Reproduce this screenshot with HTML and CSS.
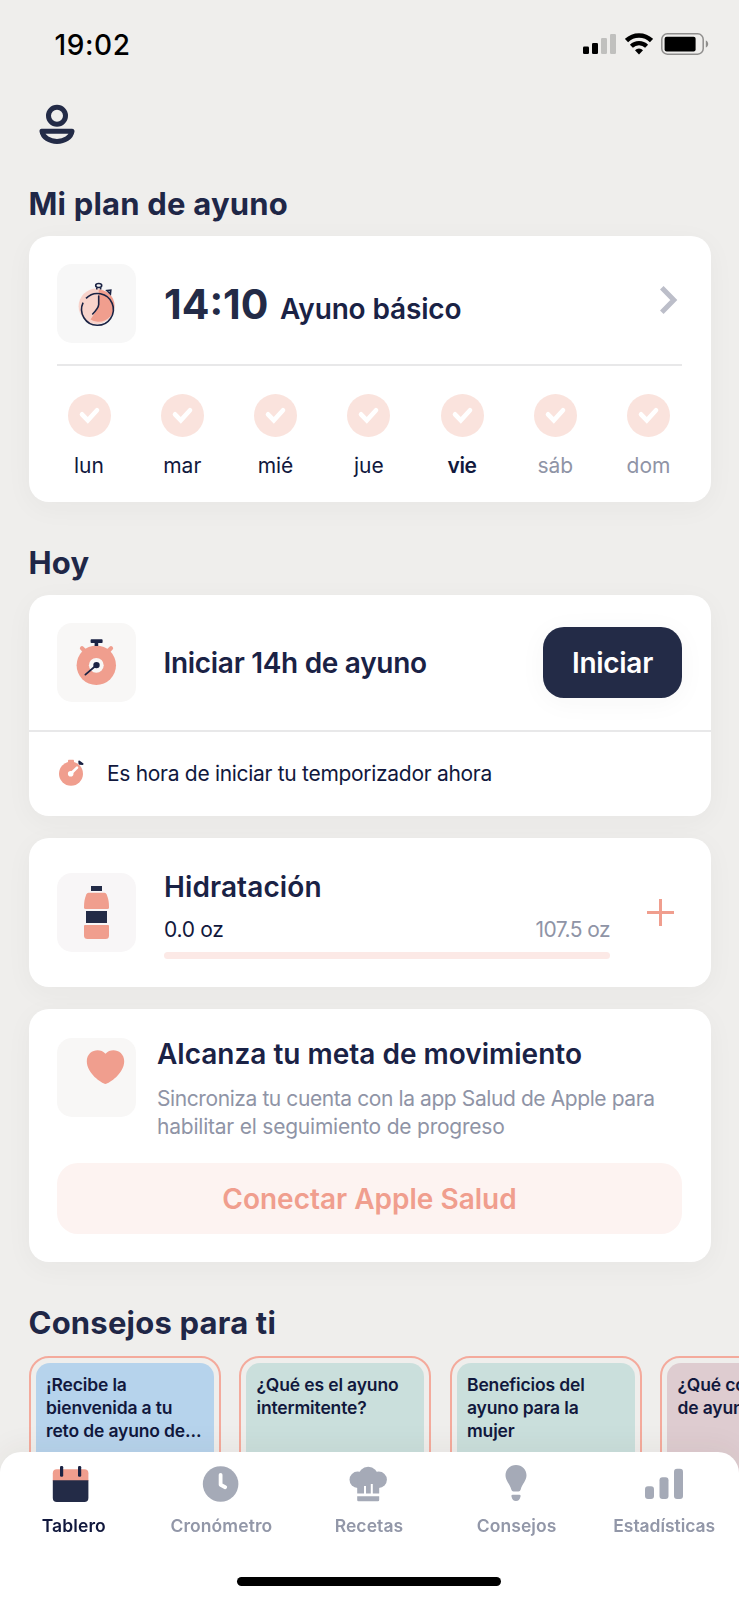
FILE: index.html
```
<!DOCTYPE html>
<html lang="es">
<head>
    <meta charset="UTF-8">
    <meta name="viewport" content="width=device-width, initial-scale=1">
    <title>Tablero</title>
    <link rel="stylesheet" href="styles.css">
</head>
<body>
    <div class="app">
        <div class="status-bar">
            <div class="clock">19:02</div>
            <div class="status-icons">
                <svg width="33" height="20" viewBox="0 0 33 20">
                    <rect x="0" y="12.5" width="6" height="7.5" rx="1.3"/>
                    <rect x="9" y="9" width="6" height="11" rx="1.3"/>
                    <rect x="18" y="4" width="6" height="16" rx="1.3" fill="#c0c0be"/>
                    <rect x="27" y="0" width="6" height="20" rx="1.3" fill="#c0c0be"/>
                </svg>
                <svg class="wifi" width="28" height="22" viewBox="0 0 28 22" fill="none" stroke="#000">
                    <path d="M1.5 7.6A18 18 0 0 1 26.5 7.6" stroke-width="4.6"/>
                    <path d="M6.4 13.3A10.8 10.8 0 0 1 21.6 13.3" stroke-width="4.2"/>
                    <path d="M10 17.3A5.5 5.5 0 0 1 18 17.3L14 21.4Z" fill="#000" stroke="none"/>
                </svg>
                <svg class="battery" width="48" height="22" viewBox="0 0 48 22">
                    <rect x=".8" y=".8" width="41.4" height="20.4" rx="5.5" fill="none" stroke="#8f8e8d" stroke-width="1.5"/>
                    <rect x="3.6" y="3.8" width="31" height="14.6" rx="2"/>
                    <path d="M44.8 7.5C48 8.6 48 13.4 44.8 14.5Z" fill="#8f8e8d"/>
                </svg>
            </div>
        </div>

        <div class="header">
            <svg width="36" height="41" viewBox="0 0 36 41" fill="none" stroke="#232b47" stroke-width="5">
                <circle cx="18" cy="11.7" r="8.5"/>
                <path d="M3 27.3H33C32 33.5 25.5 37.4 18 37.4S4 33.5 3 27.3Z" stroke-linejoin="round"/>
            </svg>
        </div>

        <h2 class="title">Mi plan de ayuno</h2>
        <div class="card plan">
            <div class="plan-head">
                <div class="icon-box">
                    <svg width="79" height="79" viewBox="0 0 79 79" fill="none" stroke="#1b2344" stroke-width="1.6">
                        <circle cx="39.3" cy="42.3" r="17.7" fill="#f8d3cb" stroke="none"/>
                        <path d="M41.7 25.7A16 16 0 1 1 33.5 55.5L38.5 48Q41.7 44 41.7 40Z" fill="#f09e8e" stroke="none"/>
                        <path d="M29 34.4A15.9 15.9 0 1 1 26.1 38.6"/>
                        <path d="M41.7 32V40.5Q41.5 44 35.7 50" stroke-linecap="round"/>
                        <ellipse cx="41.7" cy="21.5" rx="3" ry="2"/>
                        <path d="M39.8 23.5V25.5M43.6 23.5V25.5"/>
                        <path d="M50 26.6L53.8 26.2L53.4 30Z"/>
                    </svg>
                </div>
                <div class="plan-name"><span class="ratio">14:10</span><span class="subtitle">Ayuno básico</span></div>
                <svg class="chevron" width="18" height="28" viewBox="0 0 18 28" fill="none" stroke="#bcbec9" stroke-width="5">
                    <path d="M1.8 1.8L13.8 14L1.8 26.2"/>
                </svg>
            </div>
            <div class="days" id="days"></div>
        </div>

        <h2 class="title">Hoy</h2>
        <div class="card">
            <div class="fast">
                <div class="icon-box warm">
                    <svg width="79" height="79" viewBox="0 0 79 79">
                        <path d="M25 25.3L29 29.3M54 25.3L50 29.3" stroke="#f09e8e" stroke-width="4.2" stroke-linecap="round"/>
                        <circle cx="39.3" cy="42.3" r="19.7" fill="#f09e8e"/>
                        <circle cx="39.3" cy="42.3" r="7.4" fill="#f8f7f6"/>
                        <rect x="33.6" y="16.3" width="12" height="3.8" rx=".8" fill="#1b2344"/>
                        <rect x="37.6" y="19" width="3.6" height="4" fill="#1b2344"/>
                        <circle cx="39.5" cy="42.1" r="3.2" fill="#1b2344"/>
                        <path d="M39.3 42.3L28.4 51.6" stroke="#1b2344" stroke-width="1.8" stroke-linecap="round"/>
                    </svg>
                </div>
                <div class="subtitle start">Iniciar 14h de ayuno</div>
                <button class="btn">Iniciar</button>
            </div>
            <div class="hint">
                <svg width="28" height="28" viewBox="0 0 28 28">
                    <rect x="11" y=".8" width="6" height="4" rx=".8" fill="#f09e8e"/>
                    <circle cx="14" cy="14.7" r="12" fill="#f09e8e"/>
                    <path d="M22.2 2.4L25.6 5L22.4 4.8Z" fill="#1b2344" stroke="#1b2344" stroke-width="1.8" stroke-linejoin="round"/>
                    <circle cx="13.7" cy="14.8" r="2.8" fill="#fff"/>
                    <path d="M14 14.5L20 8.6" stroke="#fff" stroke-width="2.6" stroke-linecap="round"/>
                </svg>
                <span>Es hora de iniciar tu temporizador ahora</span>
            </div>
        </div>

        <div class="card water">
            <div class="icon-box cool">
                <svg width="79" height="79" viewBox="0 0 79 79">
                    <rect x="34" y="13" width="11" height="5" fill="#232b47"/>
                    <path d="M31.5 19.8H47.5Q49 19.8 49.7 21.5C51.5 26 52 29 52 34.5Q52 36 50.5 36H28.5Q27 36 27 34.5C27 29 27.5 26 29.3 21.5Q30 19.8 31.5 19.8Z" fill="#f09e8e"/>
                    <rect x="29" y="38" width="21" height="12" fill="#232b47"/>
                    <path d="M28 52H51Q52 52 52 53V62.5Q52 66 48.5 66H30.5Q27 66 27 62.5V53Q27 52 28 52Z" fill="#f09e8e"/>
                </svg>
            </div>
            <div class="water-info">
                <div class="subtitle hydration">Hidratación</div>
                <div class="amounts"><span class="now">0.0 oz</span><span class="goal">107.5 oz</span></div>
                <div class="bar"></div>
            </div>
            <svg width="27" height="27" viewBox="0 0 27 27" stroke="#f09e8e" stroke-width="3">
                <path d="M13.5 0V27M0 13.5H27"/>
            </svg>
        </div>

        <div class="card health">
            <div class="health-head">
                <div class="icon-box warm">
                    <svg width="79" height="79" viewBox="0 0 79 79">
                        <path d="M48.5 46C44.5 45 29.8 35.5 29.8 23.2C29.8 12.5 42.5 9 48.5 15.8C54.5 9 67.2 12.5 67.2 23.2C67.2 35.5 52.5 45 48.5 46Z" fill="#f09e8e"/>
                    </svg>
                </div>
                <div class="health-info">
                    <div class="subtitle move">Alcanza tu meta de movimiento</div>
                    <p>Sincroniza tu cuenta con la app Salud de Apple para<br><span>habilitar el seguimiento de progreso</span></p>
                </div>
            </div>
            <button class="btn light">Conectar Apple Salud</button>
        </div>

        <h2 class="title tips-title">Consejos para ti</h2>
        <div class="tips">
            <div class="tip"><div class="tip-body blue">¡Recibe la<br>bienvenida a tu<br>reto de ayuno de...</div></div>
            <div class="tip"><div class="tip-body green">¿Qué es el ayuno<br>intermitente?</div></div>
            <div class="tip"><div class="tip-body green">Beneficios del<br>ayuno para la<br>mujer</div></div>
            <div class="tip"><div class="tip-body pink">¿Qué co<br>de ayun</div></div>
        </div>

        <div class="tab-bar">
            <div class="tab active">
                <svg width="44" height="40" viewBox="0 0 44 40">
                    <path d="M.8 17V9.3Q.8 5.3 4.8 5.3H32.4Q36.4 5.3 36.4 9.3V17Z" fill="#f09e8e"/>
                    <path d="M.8 16.3H36.4V34Q36.4 38 32.4 38H4.8Q.8 38 .8 34Z" fill="#232b47"/>
                    <rect x="8" y="2" width="3.2" height="10.8" rx="1.3" fill="#1b2344"/>
                    <rect x="26" y="2" width="3.2" height="10.8" rx="1.3" fill="#1b2344"/>
                </svg>
                <span>Tablero</span>
            </div>
            <div class="tab">
                <svg width="44" height="40" viewBox="0 0 44 40">
                    <circle cx="21.6" cy="20" r="17.8"/>
                    <path d="M21.6 10.8V20.8L26.2 23.2" fill="none" stroke="#fff" stroke-width="3.8" stroke-linecap="round" stroke-linejoin="round"/>
                </svg>
                <span>Cronómetro</span>
            </div>
            <div class="tab">
                <svg width="44" height="40" viewBox="0 0 44 40">
                    <circle cx="10.7" cy="15.7" r="8.2"/>
                    <circle cx="21.2" cy="12.7" r="10"/>
                    <circle cx="31.7" cy="15.7" r="8.2"/>
                    <path d="M10.2 14H32.2V29.6H10.2ZM10.2 32.3H32.2V36Q32.2 37.3 31 37.3H11.4Q10.2 37.3 10.2 36Z"/>
                    <path d="M18 22V30M24.8 20V30" stroke="#fff" stroke-width="2"/>
                </svg>
                <span>Recetas</span>
            </div>
            <div class="tab">
                <svg width="44" height="40" viewBox="0 0 44 40">
                    <path d="M21 1C15 1 10.5 5.6 10.5 11.3C10.5 17 15 20 16.3 25.5Q16.8 27.5 18.5 27.5H23.5Q25.2 27.5 25.7 25.5C27 20 31.5 17 31.5 11.3C31.5 5.6 27 1 21 1Z"/>
                    <path d="M17.5 30.7H24.5Q26 30.7 25.6 32.2C24.8 35.5 23.5 37 21 37S17.2 35.5 16.4 32.2Q16 30.7 17.5 30.7Z"/>
                </svg>
                <span>Consejos</span>
            </div>
            <div class="tab stats">
                <svg width="44" height="40" viewBox="0 0 44 40">
                    <rect x="3" y="22.3" width="9" height="12.7" rx="3"/>
                    <rect x="17.5" y="13.3" width="9" height="21.7" rx="3"/>
                    <rect x="32" y="4.7" width="9" height="30.3" rx="3"/>
                </svg>
                <span>Estadísticas</span>
            </div>
            <div class="home-indicator"></div>
        </div>
    </div>

    <template id="day">
        <div class="day">
            <svg width="43" height="43" viewBox="0 0 43 43">
                <circle cx="21.5" cy="21.5" r="21.5" fill="#fae3dd"/>
                <path d="M14 20.3L19.8 26.3L29 16.2" fill="none" stroke="#fff" stroke-width="4.6" stroke-linecap="round"/>
            </svg>
            <span></span>
        </div>
    </template>

    <script>
        const days = ['lun', 'mar', 'mié', 'jue', 'vie', 'sáb', 'dom'];
        const today = 4;

        // fill the week row from the template
        days.forEach(function (name, i) {
            let day = document.getElementById('day').content.cloneNode(true);
            day.querySelector('span').textContent = name;
            if (i === today) day.querySelector('.day').classList.add('today');
            if (i > today) day.querySelector('.day').classList.add('next');
            document.getElementById('days').appendChild(day);
        });
    </script>
</body>
</html>
```
FILE: styles.css
```
* {
    box-sizing: border-box;
}
body {
    margin: 0;
    background: #efeeec;
    color: #11183d;
    font-family: Inter, "Liberation Sans", sans-serif;
}
svg {
    display: block;
    flex-shrink: 0;
}
.app {
    height: 1600px;
    padding: 0 28.5px;
    overflow: hidden;
}

.status-bar {
    height: 88px;
    padding: 0 2px 0 26px;
    display: flex;
    align-items: center;
    justify-content: space-between;
}
.clock {
    font-size: 28px;
    font-weight: 500;
    letter-spacing: .6px;
    color: #000;
    padding-top: 1px;
}
.status-icons {
    display: flex;
    align-items: center;
}
.wifi {
    margin-left: 9px;
}
.battery {
    margin-left: 8px;
}
.header {
    height: 72px;
    padding: 16px 10.5px;
}

.title {
    margin: 41px 0 12px;
    line-height: 40px;
    font-size: 31px;
    font-weight: 700;
    letter-spacing: .2px;
    color: #1f2747;
}
.header + .title {
    margin-top: 24px;
}
.card {
    background: #fff;
    border-radius: 20px;
    margin-bottom: 21.5px;
    box-shadow: 0 6px 28px rgba(60, 50, 40, .04);
}
.icon-box {
    width: 79px;
    height: 79px;
    flex-shrink: 0;
    border-radius: 15px;
    background: #f7f7f7;
}
.icon-box.warm {
    background: #f8f7f6;
}
.icon-box.cool {
    background: #f8f6f7;
}
.subtitle {
    line-height: 36px;
    font-size: 28px;
    font-weight: 600;
    color: #1a2245;
    white-space: nowrap;
}

.plan {
    height: 266px;
    padding: 28px 28.5px;
}
.plan-head {
    height: 102px;
    display: flex;
    align-items: flex-start;
    border-bottom: 2px solid #e8e8e9;
}
.plan-name {
    flex: 1;
    display: flex;
    align-items: baseline;
    padding: 15px 0 0 28px;
}
.ratio {
    width: 116px;
    line-height: 50px;
    font-size: 41px;
    font-weight: 700;
    color: #232b47;
}
.plan-name .subtitle {
    letter-spacing: -.15px;
}
.chevron {
    margin: 22px 4px 0 0;
}
.days {
    display: flex;
    justify-content: space-between;
    padding: 28px 12px 0 10.5px;
}
.day {
    width: 43px;
    display: flex;
    flex-direction: column;
    align-items: center;
    gap: 16px;
    line-height: 26px;
    font-size: 21px;
}
.day.today {
    font-weight: 600;
    letter-spacing: -.4px;
}
.day.next {
    color: #8f94a6;
}

.fast {
    height: 137px;
    padding: 0 28.5px;
    display: flex;
    align-items: center;
    border-bottom: 2px solid #e8e8e9;
}
.start {
    flex: 1;
    padding-left: 27.5px;
    letter-spacing: -.3px;
}
.btn {
    width: 139px;
    height: 71px;
    padding: 0;
    border: none;
    border-radius: 21px;
    background: #232b47;
    color: #fff;
    font-family: inherit;
    font-size: 28px;
    font-weight: 600;
    letter-spacing: -.3px;
    box-shadow: 0 4px 28px rgba(60, 50, 40, .04);
}
.hint {
    height: 84px;
    padding: 0 28.5px 2px;
    display: flex;
    align-items: center;
    gap: 22px;
    font-size: 21px;
    letter-spacing: -.3px;
}

.water {
    height: 149.5px;
    padding: 0 36px 0 28.5px;
    display: flex;
    align-items: center;
}
.water-info {
    width: 446px;
    margin: 3px 37px 0 28px;
}
.hydration {
    letter-spacing: .1px;
}
.amounts {
    display: flex;
    justify-content: space-between;
    margin: 11px 0 8px;
    line-height: 28px;
    font-size: 21px;
    letter-spacing: -.3px;
}
.goal {
    color: #8f94a6;
    letter-spacing: -.55px;
}
.bar {
    height: 7.5px;
    border-radius: 4px;
    background: #fce9e6;
}

.health {
    height: 253.5px;
    padding: 29px 28.5px 28px;
}
.health-head {
    height: 125px;
    display: flex;
}
.health-info {
    padding-left: 21px;
    margin-top: -2px;
}
.health-info p {
    margin: 13px 0 0;
    line-height: 28px;
    font-size: 21px;
    letter-spacing: -.41px;
    color: #8f94a6;
    white-space: nowrap;
}
.health-info p span {
    letter-spacing: -.22px;
}
.btn.light {
    width: 100%;
    padding-top: 1px;
    background: #fdf3f1;
    color: #f09e8e;
    letter-spacing: 0;
    box-shadow: none;
}

.tips {
    display: flex;
    gap: 18.5px;
    margin: 13px -28.5px 0 0;
    overflow: hidden;
}
.tip {
    width: 192px;
    height: 260px;
    flex-shrink: 0;
    padding: 5px;
    border: 2px solid #f4aa9c;
    border-radius: 20px;
}
.tip-body {
    height: 100%;
    padding: 10px 0 0 10.5px;
    border-radius: 14px;
    line-height: 23.2px;
    font-size: 17.5px;
    font-weight: 600;
    letter-spacing: -.15px;
    white-space: nowrap;
    overflow: hidden;
}
.blue {
    background: #b6d3ec;
}
.green {
    background: #cadfdc;
}
.pink {
    background: #deccd0;
}

/* the bar stays above the scrolled content */
.tab-bar {
    position: fixed;
    left: 0;
    right: 0;
    bottom: 0;
    height: 148px;
    padding: 12px 1px 0 0;
    display: grid;
    grid-template-columns: repeat(5, 1fr);
    grid-template-rows: 74px 1fr;
    background: #fff;
    border-radius: 21px 21px 0 0;
    box-shadow: 0 -4px 30px rgba(60, 50, 40, .06);
}
.tab {
    display: flex;
    flex-direction: column;
    align-items: center;
    gap: 10px;
    line-height: 24px;
    font-size: 17.5px;
    font-weight: 600;
    letter-spacing: .1px;
    color: #9297a8;
    fill: #a5aab7;
}
.tab.active {
    color: #11183d;
}
.tab.stats {
    letter-spacing: -.05px;
}
.home-indicator {
    grid-column: 1 / -1;
    justify-self: center;
    width: 264px;
    height: 9px;
    margin-top: 39px;
    border-radius: 5px;
    background: #000;
}
```
